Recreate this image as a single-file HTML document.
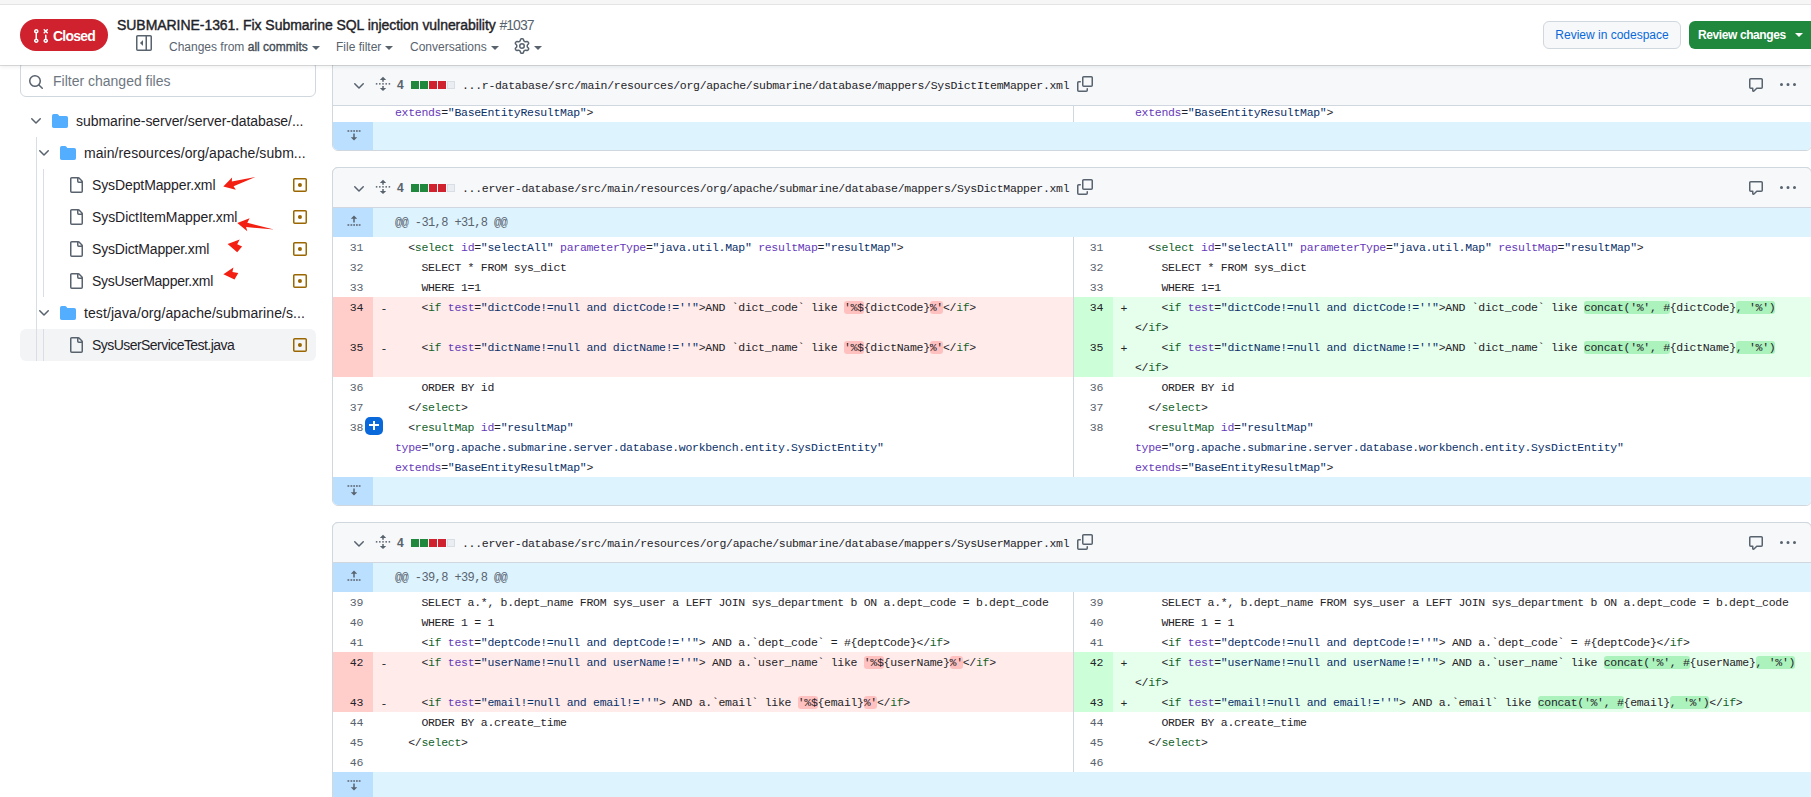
<!DOCTYPE html>
<html><head><meta charset="utf-8"><title>PR diff</title><style>
*{box-sizing:border-box}
html,body{margin:0;padding:0}
body{width:1811px;height:797px;overflow:hidden;position:relative;background:#fff;font-family:"Liberation Sans",sans-serif;color:#1f2328}
.ic{position:absolute;display:block;width:16px;height:16px;line-height:0}
.ic svg{display:block}
.topstrip{position:absolute;left:0;top:0;width:1811px;height:5px;background:#f6f6f6;border-bottom:1px solid #e6e6e6}
.header{position:absolute;left:0;top:5px;width:1811px;height:60px;background:#fff;z-index:20;box-shadow:0 1px 0 rgba(31,35,40,0.14),0 2px 4px rgba(31,35,40,0.08)}
.header .ic{margin-top:-5px}
.badge{position:absolute;left:20px;top:14px;width:88px;height:32px;border-radius:16px;background:#cf222e}
.badge .ic{margin-top:0}
.bt{position:absolute;left:33px;top:8px;font-size:14px;font-weight:bold;color:#fff;line-height:18px;letter-spacing:-0.75px}
.title{position:absolute;left:117px;top:11px;font-size:14px;font-weight:normal;-webkit-text-stroke:0.4px #1f2328;line-height:18px;white-space:nowrap;letter-spacing:-0.05px}
.title .num{font-weight:normal;color:#59636e;font-size:14px;-webkit-text-stroke:0}
.tb{position:absolute;top:34px;font-size:12px;line-height:16px;color:#59636e;white-space:nowrap}
.tb b{font-weight:normal;color:#424a53;-webkit-text-stroke:0.35px #424a53}
.caret{display:inline-block;width:0;height:0;border-left:4px solid transparent;border-right:4px solid transparent;border-top:4px solid #59636e;margin-left:4px;vertical-align:middle}
.caret.w{border-top-color:#fff;position:absolute;left:106px;top:12px;margin:0}
.btn1{position:absolute;left:1543px;top:16px;width:138px;height:28px;border:1px solid #d0d7de;border-radius:6px;background:#f6f8fa;color:#0969da;font-size:12px;line-height:26px;text-align:center;white-space:nowrap}
.btn2{position:absolute;left:1689px;top:16px;width:130px;height:28px;border-radius:6px;background:#1f883d;color:#fff;font-size:12px;font-weight:bold;line-height:28px;padding-left:9px;white-space:nowrap;letter-spacing:-0.4px}
.filter{position:absolute;left:20px;top:61px;width:296px;height:36px;border:1px solid #d0d7de;border-radius:6px;background:#fff}
.filter .ph{position:absolute;left:32px;top:10px;font-size:14px;line-height:18px;color:#6e7781}
.tt{position:absolute;font-size:14px;line-height:32px;color:#1f2328;white-space:nowrap}
.sel{position:absolute;left:20px;width:296px;height:32px;border-radius:6px;background:#f3f4f6}
.guide{position:absolute;width:1px;background:#d8dee4}
.card{position:absolute;left:332px;width:1480px;border:1px solid #d0d7de;border-radius:6px;background:#fff}
.fh{position:absolute;left:332px;width:1480px;height:40px;background:#f6f8fa;border-left:1px solid #d0d7de;border-right:1px solid #d0d7de;border-bottom:1px solid #d0d7de;z-index:5}
.fh .ic{position:absolute}
.fh .ic{margin-left:-333px}
.cnt{position:absolute;top:12px;margin-left:-333px;font-size:12px;font-weight:bold;line-height:16px;color:#59636e}
.sq{position:absolute;top:16px;width:8px;height:8px;margin-left:-333px}
.sq.g{background:#1f883d}.sq.r{background:#cf222e}.sq.n{background:#eaeef2;border:1px solid #d8dee4}
.path{position:absolute;top:13px;margin-left:-333px;font-family:"Liberation Mono",monospace;font-size:11.5px;letter-spacing:-0.3px;line-height:16px;color:#1f2328;white-space:nowrap}
.hunk{position:absolute;left:333px;width:1478px;background:#ddf4ff}
.hg{position:absolute;left:0;top:0;width:40px;background:#bbdfff}
.hg svg{position:absolute;left:13px;top:7px}
.dn .hg svg{top:3px}
.ht{position:absolute;left:62px;top:5px;font-family:"Liberation Mono",monospace;font-size:12px;letter-spacing:-0.6px;line-height:20px;color:#59636e;white-space:pre}
.row{position:absolute;left:333px;width:1478px}
.ln,.cd{position:absolute;top:0;bottom:0;font-family:"Liberation Mono",monospace;font-size:11.5px;letter-spacing:-0.3px;line-height:20px;white-space:pre}
.ln span,.cl span{position:relative;top:1px}
.ln{width:40px;text-align:right;padding-right:10px;color:#59636e}
.ln.l{left:0}
.cd.l{left:40px;width:700px}
.ln.r{left:740px;width:40px;border-left:1px solid #d0d7de}
.cd.r{left:780px;width:698px}
.ln.del{background:#ffcecb;color:#1f2328}
.cd.del{background:#ffebe9}
.ln.add{background:#ccffd8;color:#1f2328}
.cd.add{background:#e6ffec}
.cd .cl{padding-left:22px;height:20px}
.mk{position:absolute;left:7.5px;top:2px;font-style:normal;color:#1f2328}
.cd.del .hl{background:rgba(255,129,130,0.4);border-radius:3px}
.cd.add .hl{background:#abf2bc;border-radius:3px}
.plus{position:absolute;width:18px;height:18px;border-radius:5px;background:#0969da;z-index:6}
.plus:before{content:"";position:absolute;left:4.25px;top:7.25px;width:9.5px;height:1.25px;background:#fff}
.plus:after{content:"";position:absolute;left:8.4px;top:3.6px;width:1.25px;height:9.5px;background:#fff}
.arrows{position:absolute;left:0;top:0;z-index:30}
</style></head>
<body>
<div class="topstrip"></div><div class="header"><div class="badge"><span class="ic" style="left:13px;top:9px"><svg width="16" height="16" viewBox="0 0 16 16" fill="#fff"><path d="M3.25 1A2.25 2.25 0 0 1 4 5.372v5.256a2.251 2.251 0 1 1-1.5 0V5.372A2.251 2.251 0 0 1 3.25 1Zm9.5 5.5a.75.75 0 0 1 .75.75v3.378a2.251 2.251 0 1 1-1.5 0V7.25a.75.75 0 0 1 .75-.75Zm-2.03-5.273a.75.75 0 0 1 1.06 0l.97.97.97-.97a.748.748 0 0 1 1.265.332.75.75 0 0 1-.205.729l-.97.97.97.97a.751.751 0 0 1-.018 1.042.751.751 0 0 1-1.042.018l-.97-.97-.97.97a.749.749 0 0 1-1.275-.326.749.749 0 0 1 .215-.734l.97-.97-.97-.97a.75.75 0 0 1 0-1.06ZM2.5 3.25a.75.75 0 1 0 1.5 0 .75.75 0 0 0-1.5 0ZM3.25 12a.75.75 0 1 0 0 1.5.75.75 0 0 0 0-1.5Zm9.5 0a.75.75 0 1 0 0 1.5.75.75 0 0 0 0-1.5Z"/></svg></span><span class="bt">Closed</span></div><div class="title">SUBMARINE-1361. Fix Submarine SQL injection vulnerability <span class="num" style="letter-spacing:-1px">#1037</span></div><span class="ic" style="left:136px;top:35px"><svg width="16" height="16" viewBox="0 0 16 16" fill="#59636e"><path d="m4.177 7.823 2.396-2.396A.25.25 0 0 1 7 5.604v4.792a.25.25 0 0 1-.427.177L4.177 8.177a.25.25 0 0 1 0-.354Z"/><path d="M0 1.75C0 .784.784 0 1.75 0h12.5C15.216 0 16 .784 16 1.75v12.5A1.75 1.75 0 0 1 14.25 16H1.75A1.75 1.75 0 0 1 0 14.25Zm1.75-.25a.25.25 0 0 0-.25.25v12.5c0 .138.112.25.25.25H9.5v-13Zm12.5 13a.25.25 0 0 0 .25-.25V1.75a.25.25 0 0 0-.25-.25H11v13Z"/></svg></span><span class="tb" style="left:169px">Changes from <b>all commits</b><i class="caret"></i></span><span class="tb" style="left:336px">File filter<i class="caret"></i></span><span class="tb" style="left:410px">Conversations<i class="caret"></i></span><span class="ic" style="left:514px;top:38px"><svg width="16" height="16" viewBox="0 0 16 16" fill="#59636e"><path d="M8 0a8.2 8.2 0 0 1 .701.031C9.444.095 9.99.645 10.16 1.29l.288 1.107c.018.066.079.158.212.224.231.114.454.243.668.386.123.082.233.09.299.071l1.103-.303c.644-.176 1.392.021 1.82.63.27.385.506.792.704 1.218.315.675.111 1.422-.364 1.891l-.814.806c-.049.048-.098.147-.088.294.016.257.016.515 0 .772-.01.147.038.246.088.294l.814.806c.475.469.679 1.216.364 1.891a7.977 7.977 0 0 1-.704 1.217c-.428.61-1.176.807-1.82.63l-1.102-.302c-.067-.019-.177-.011-.3.071a5.909 5.909 0 0 1-.668.386c-.133.066-.194.158-.211.224l-.29 1.106c-.168.646-.715 1.196-1.458 1.26a8.006 8.006 0 0 1-1.402 0c-.743-.064-1.289-.614-1.458-1.26l-.289-1.106c-.018-.066-.079-.158-.212-.224a5.738 5.738 0 0 1-.668-.386c-.123-.082-.233-.09-.299-.071l-1.103.303c-.644.176-1.392-.021-1.82-.63a8.12 8.12 0 0 1-.704-1.218c-.315-.675-.111-1.422.363-1.891l.815-.806c.05-.048.098-.147.088-.294a6.214 6.214 0 0 1 0-.772c.01-.147-.038-.246-.088-.294l-.815-.806C.635 6.045.431 5.298.746 4.623a7.92 7.92 0 0 1 .704-1.217c.428-.61 1.176-.807 1.82-.63l1.102.302c.067.019.177.011.3-.071.214-.143.437-.272.668-.386.133-.066.194-.158.211-.224l.29-1.106C6.009.645 6.556.095 7.299.03 7.53.01 7.764 0 8 0Zm-.571 1.525c-.036.003-.108.036-.137.146l-.289 1.105c-.147.561-.549.967-.998 1.189-.173.086-.34.183-.5.29-.417.278-.97.423-1.529.27l-1.103-.303c-.109-.03-.175.016-.195.045-.22.312-.412.644-.573.99-.014.031-.021.11.059.19l.815.806c.411.406.562.957.53 1.456a4.709 4.709 0 0 0 0 .582c.032.499-.119 1.05-.53 1.456l-.815.806c-.081.08-.073.159-.059.19.162.346.353.677.573.989.02.03.085.076.195.046l1.102-.303c.56-.153 1.113-.008 1.53.27.161.107.328.204.501.29.447.222.85.629.997 1.189l.289 1.105c.029.109.101.143.137.146a6.6 6.6 0 0 0 1.142 0c.036-.003.108-.036.137-.146l.289-1.105c.147-.561.549-.967.998-1.189.173-.086.34-.183.5-.29.417-.278.97-.423 1.529-.27l1.103.303c.109.029.175-.016.195-.045.22-.313.411-.644.573-.99.014-.031.021-.11-.059-.19l-.815-.806c-.411-.406-.562-.957-.53-1.456a4.709 4.709 0 0 0 0-.582c-.032-.499.119-1.05.53-1.456l.815-.806c.081-.08.073-.159.059-.19a6.464 6.464 0 0 0-.573-.989c-.02-.03-.085-.076-.195-.046l-1.102.303c-.56.153-1.113.008-1.53-.27a4.44 4.44 0 0 0-.501-.29c-.447-.222-.85-.629-.997-1.189l-.289-1.105c-.029-.11-.101-.143-.137-.146a6.6 6.6 0 0 0-1.142 0ZM11 8a3 3 0 1 1-6 0 3 3 0 0 1 6 0ZM9.5 8a1.5 1.5 0 1 0-3.001.001A1.5 1.5 0 0 0 9.5 8Z"/></svg></span><i class="caret" style="position:absolute;left:534px;top:41px;margin:0"></i><div class="btn1">Review in codespace</div><div class="btn2">Review changes<i class="caret w"></i></div></div>
<div class="filter"><span class="ic" style="left:7px;top:12px"><svg width="16" height="16" viewBox="0 0 16 16" fill="#59636e"><path d="M10.68 11.74a6 6 0 0 1-7.922-8.982 6 6 0 0 1 8.982 7.922l3.04 3.04a.749.749 0 0 1-.326 1.275.749.749 0 0 1-.734-.215ZM11.5 7a4.499 4.499 0 1 0-8.997 0A4.499 4.499 0 0 0 11.5 7Z"/></svg></span><span class="ph">Filter changed files</span></div><div class="sel" style="top:329px"></div><div class="guide" style="left:36px;top:137px;height:224px"></div><div class="guide" style="left:43px;top:169px;height:128px"></div><div class="guide" style="left:43px;top:329px;height:32px"></div><span class="ic" style="left:28px;top:113px"><svg width="16" height="16" viewBox="0 0 16 16"><path d="M12.78 5.22a.749.749 0 0 1 0 1.06l-4.25 4.25a.749.749 0 0 1-1.06 0L3.22 6.28a.749.749 0 1 1 1.06-1.06L8 8.939l3.72-3.719a.749.749 0 0 1 1.06 0Z" fill="#59636e"/></svg></span><span class="ic" style="left:52px;top:113px"><svg width="16" height="16" viewBox="0 0 16 16"><path d="M1.75 1A1.75 1.75 0 0 0 0 2.75v10.5C0 14.216.784 15 1.75 15h12.5A1.75 1.75 0 0 0 16 13.25v-8.5A1.75 1.75 0 0 0 14.25 3H7.5a.25.25 0 0 1-.2-.1l-.9-1.2C6.07 1.26 5.55 1 5 1H1.75Z" fill="#54aeff"/></svg></span><span class="tt" style="left:76px;top:105px;letter-spacing:-0.06px">submarine-server/server-database/...</span><span class="ic" style="left:36px;top:145px"><svg width="16" height="16" viewBox="0 0 16 16"><path d="M12.78 5.22a.749.749 0 0 1 0 1.06l-4.25 4.25a.749.749 0 0 1-1.06 0L3.22 6.28a.749.749 0 1 1 1.06-1.06L8 8.939l3.72-3.719a.749.749 0 0 1 1.06 0Z" fill="#59636e"/></svg></span><span class="ic" style="left:60px;top:145px"><svg width="16" height="16" viewBox="0 0 16 16"><path d="M1.75 1A1.75 1.75 0 0 0 0 2.75v10.5C0 14.216.784 15 1.75 15h12.5A1.75 1.75 0 0 0 16 13.25v-8.5A1.75 1.75 0 0 0 14.25 3H7.5a.25.25 0 0 1-.2-.1l-.9-1.2C6.07 1.26 5.55 1 5 1H1.75Z" fill="#54aeff"/></svg></span><span class="tt" style="left:84px;top:137px;letter-spacing:0.07px">main/resources/org/apache/subm...</span><span class="ic" style="left:68px;top:177px"><svg width="16" height="16" viewBox="0 0 16 16" fill="#59636e"><path d="M2 1.75C2 .784 2.784 0 3.75 0h6.586c.464 0 .909.184 1.237.513l2.914 2.914c.329.328.513.773.513 1.237v9.586A1.75 1.75 0 0 1 13.25 16h-9.5A1.75 1.75 0 0 1 2 14.25Zm1.75-.25a.25.25 0 0 0-.25.25v12.5c0 .138.112.25.25.25h9.5a.25.25 0 0 0 .25-.25V6h-2.75A1.75 1.75 0 0 1 9 4.25V1.5Zm6.75.062V4.25c0 .138.112.25.25.25h2.688l-.011-.013-2.914-2.914-.013-.011Z"/></svg></span><span class="tt" style="left:92px;top:169px;letter-spacing:-0.11px">SysDeptMapper.xml</span><span class="ic" style="left:292px;top:177px"><svg width="16" height="16" viewBox="0 0 16 16" fill="#9a6700"><path d="M13.25 1c.966 0 1.75.784 1.75 1.75v10.5A1.75 1.75 0 0 1 13.25 15H2.75A1.75 1.75 0 0 1 1 13.25V2.75C1 1.784 1.784 1 2.75 1ZM2.75 2.5a.25.25 0 0 0-.25.25v10.5c0 .138.112.25.25.25h10.5a.25.25 0 0 0 .25-.25V2.75a.25.25 0 0 0-.25-.25ZM8 10a2 2 0 1 1-.001-3.999A2 2 0 0 1 8 10Z"/></svg></span><span class="ic" style="left:68px;top:209px"><svg width="16" height="16" viewBox="0 0 16 16" fill="#59636e"><path d="M2 1.75C2 .784 2.784 0 3.75 0h6.586c.464 0 .909.184 1.237.513l2.914 2.914c.329.328.513.773.513 1.237v9.586A1.75 1.75 0 0 1 13.25 16h-9.5A1.75 1.75 0 0 1 2 14.25Zm1.75-.25a.25.25 0 0 0-.25.25v12.5c0 .138.112.25.25.25h9.5a.25.25 0 0 0 .25-.25V6h-2.75A1.75 1.75 0 0 1 9 4.25V1.5Zm6.75.062V4.25c0 .138.112.25.25.25h2.688l-.011-.013-2.914-2.914-.013-.011Z"/></svg></span><span class="tt" style="left:92px;top:201px;letter-spacing:-0.08px">SysDictItemMapper.xml</span><span class="ic" style="left:292px;top:209px"><svg width="16" height="16" viewBox="0 0 16 16" fill="#9a6700"><path d="M13.25 1c.966 0 1.75.784 1.75 1.75v10.5A1.75 1.75 0 0 1 13.25 15H2.75A1.75 1.75 0 0 1 1 13.25V2.75C1 1.784 1.784 1 2.75 1ZM2.75 2.5a.25.25 0 0 0-.25.25v10.5c0 .138.112.25.25.25h10.5a.25.25 0 0 0 .25-.25V2.75a.25.25 0 0 0-.25-.25ZM8 10a2 2 0 1 1-.001-3.999A2 2 0 0 1 8 10Z"/></svg></span><span class="ic" style="left:68px;top:241px"><svg width="16" height="16" viewBox="0 0 16 16" fill="#59636e"><path d="M2 1.75C2 .784 2.784 0 3.75 0h6.586c.464 0 .909.184 1.237.513l2.914 2.914c.329.328.513.773.513 1.237v9.586A1.75 1.75 0 0 1 13.25 16h-9.5A1.75 1.75 0 0 1 2 14.25Zm1.75-.25a.25.25 0 0 0-.25.25v12.5c0 .138.112.25.25.25h9.5a.25.25 0 0 0 .25-.25V6h-2.75A1.75 1.75 0 0 1 9 4.25V1.5Zm6.75.062V4.25c0 .138.112.25.25.25h2.688l-.011-.013-2.914-2.914-.013-.011Z"/></svg></span><span class="tt" style="left:92px;top:233px;letter-spacing:-0.16px">SysDictMapper.xml</span><span class="ic" style="left:292px;top:241px"><svg width="16" height="16" viewBox="0 0 16 16" fill="#9a6700"><path d="M13.25 1c.966 0 1.75.784 1.75 1.75v10.5A1.75 1.75 0 0 1 13.25 15H2.75A1.75 1.75 0 0 1 1 13.25V2.75C1 1.784 1.784 1 2.75 1ZM2.75 2.5a.25.25 0 0 0-.25.25v10.5c0 .138.112.25.25.25h10.5a.25.25 0 0 0 .25-.25V2.75a.25.25 0 0 0-.25-.25ZM8 10a2 2 0 1 1-.001-3.999A2 2 0 0 1 8 10Z"/></svg></span><span class="ic" style="left:68px;top:273px"><svg width="16" height="16" viewBox="0 0 16 16" fill="#59636e"><path d="M2 1.75C2 .784 2.784 0 3.75 0h6.586c.464 0 .909.184 1.237.513l2.914 2.914c.329.328.513.773.513 1.237v9.586A1.75 1.75 0 0 1 13.25 16h-9.5A1.75 1.75 0 0 1 2 14.25Zm1.75-.25a.25.25 0 0 0-.25.25v12.5c0 .138.112.25.25.25h9.5a.25.25 0 0 0 .25-.25V6h-2.75A1.75 1.75 0 0 1 9 4.25V1.5Zm6.75.062V4.25c0 .138.112.25.25.25h2.688l-.011-.013-2.914-2.914-.013-.011Z"/></svg></span><span class="tt" style="left:92px;top:265px;letter-spacing:-0.25px">SysUserMapper.xml</span><span class="ic" style="left:292px;top:273px"><svg width="16" height="16" viewBox="0 0 16 16" fill="#9a6700"><path d="M13.25 1c.966 0 1.75.784 1.75 1.75v10.5A1.75 1.75 0 0 1 13.25 15H2.75A1.75 1.75 0 0 1 1 13.25V2.75C1 1.784 1.784 1 2.75 1ZM2.75 2.5a.25.25 0 0 0-.25.25v10.5c0 .138.112.25.25.25h10.5a.25.25 0 0 0 .25-.25V2.75a.25.25 0 0 0-.25-.25ZM8 10a2 2 0 1 1-.001-3.999A2 2 0 0 1 8 10Z"/></svg></span><span class="ic" style="left:36px;top:305px"><svg width="16" height="16" viewBox="0 0 16 16"><path d="M12.78 5.22a.749.749 0 0 1 0 1.06l-4.25 4.25a.749.749 0 0 1-1.06 0L3.22 6.28a.749.749 0 1 1 1.06-1.06L8 8.939l3.72-3.719a.749.749 0 0 1 1.06 0Z" fill="#59636e"/></svg></span><span class="ic" style="left:60px;top:305px"><svg width="16" height="16" viewBox="0 0 16 16"><path d="M1.75 1A1.75 1.75 0 0 0 0 2.75v10.5C0 14.216.784 15 1.75 15h12.5A1.75 1.75 0 0 0 16 13.25v-8.5A1.75 1.75 0 0 0 14.25 3H7.5a.25.25 0 0 1-.2-.1l-.9-1.2C6.07 1.26 5.55 1 5 1H1.75Z" fill="#54aeff"/></svg></span><span class="tt" style="left:84px;top:297px;letter-spacing:0.09px">test/java/org/apache/submarine/s...</span><span class="ic" style="left:68px;top:337px"><svg width="16" height="16" viewBox="0 0 16 16" fill="#59636e"><path d="M2 1.75C2 .784 2.784 0 3.75 0h6.586c.464 0 .909.184 1.237.513l2.914 2.914c.329.328.513.773.513 1.237v9.586A1.75 1.75 0 0 1 13.25 16h-9.5A1.75 1.75 0 0 1 2 14.25Zm1.75-.25a.25.25 0 0 0-.25.25v12.5c0 .138.112.25.25.25h9.5a.25.25 0 0 0 .25-.25V6h-2.75A1.75 1.75 0 0 1 9 4.25V1.5Zm6.75.062V4.25c0 .138.112.25.25.25h2.688l-.011-.013-2.914-2.914-.013-.011Z"/></svg></span><span class="tt" style="left:92px;top:329px;letter-spacing:-0.55px">SysUserServiceTest.java</span><span class="ic" style="left:292px;top:337px"><svg width="16" height="16" viewBox="0 0 16 16" fill="#9a6700"><path d="M13.25 1c.966 0 1.75.784 1.75 1.75v10.5A1.75 1.75 0 0 1 13.25 15H2.75A1.75 1.75 0 0 1 1 13.25V2.75C1 1.784 1.784 1 2.75 1ZM2.75 2.5a.25.25 0 0 0-.25.25v10.5c0 .138.112.25.25.25h10.5a.25.25 0 0 0 .25-.25V2.75a.25.25 0 0 0-.25-.25ZM8 10a2 2 0 1 1-.001-3.999A2 2 0 0 1 8 10Z"/></svg></span>
<div class="card" style="top:20px;height:131px"></div>
<div class="row" style="top:102px;height:20px">
<div class="ln l"><span></span></div>
<div class="cd l"><i class="mk"></i><div class="cl"><span style="color:#6639ba">extends</span><span style="color:#1f2328">=</span><span style="color:#0a3069">&quot;BaseEntityResultMap&quot;</span><span style="color:#1f2328">&gt;</span></div></div>
<div class="ln r"><span></span></div>
<div class="cd r"><i class="mk"></i><div class="cl"><span style="color:#6639ba">extends</span><span style="color:#1f2328">=</span><span style="color:#0a3069">&quot;BaseEntityResultMap&quot;</span><span style="color:#1f2328">&gt;</span></div></div>
</div>
<div class="hunk dn" style="top:122px;height:28px;border-radius:0 0 5px 5px;overflow:hidden"><div class="hg" style="height:28px"><svg width="16" height="16" viewBox="0 0 16 16" fill="#59636e"><path d="M8 15.5 L11.25 12.25 L8.75 12.25 L8.75 8.5 L7.25 8.5 L7.25 12.25 L4.75 12.25 Z"/><rect x="1.5" y="5.25" width="1.75" height="1.5"/><rect x="4.5" y="5.25" width="1.75" height="1.5"/><rect x="7.25" y="5.25" width="1.75" height="1.5"/><rect x="10" y="5.25" width="1.75" height="1.5"/><rect x="12.75" y="5.25" width="1.75" height="1.5"/></svg></div><div class="ht"></div></div>
<div class="fh" style="top:65px;height:41px"><span class="ic" style="left:351px;top:13px"><svg width="16" height="16" viewBox="0 0 16 16"><path d="M12.78 5.22a.749.749 0 0 1 0 1.06l-4.25 4.25a.749.749 0 0 1-1.06 0L3.22 6.28a.749.749 0 1 1 1.06-1.06L8 8.939l3.72-3.719a.749.749 0 0 1 1.06 0Z" fill="#59636e"/></svg></span><span class="ic" style="left:375px;top:11px"><svg width="16" height="16" viewBox="0 0 16 16" fill="#59636e"><path d="M8 0.8 L11.2 3.9 L8.75 3.9 L8.75 5.7 L7.25 5.7 L7.25 3.9 L4.8 3.9 Z"/><path d="M8 15 L11.2 11.9 L8.75 11.9 L8.75 10.1 L7.25 10.1 L7.25 11.9 L4.8 11.9 Z"/><rect x="0.85" y="7.1" width="1.5" height="1.5"/><rect x="4.05" y="7.1" width="1.5" height="1.5"/><rect x="7.25" y="7.1" width="1.5" height="1.5"/><rect x="10.45" y="7.1" width="1.5" height="1.5"/><rect x="13.65" y="7.1" width="1.5" height="1.5"/></svg></span><span class="cnt" style="left:397px">4</span><span class="sq g" style="left:411px"></span><span class="sq g" style="left:420px"></span><span class="sq r" style="left:429px"></span><span class="sq r" style="left:438px"></span><span class="sq n" style="left:447px"></span><span class="path" style="left:462px">...r-database/src/main/resources/org/apache/submarine/database/mappers/SysDictItemMapper.xml</span><span class="ic" style="left:1077px;top:11px"><svg width="16" height="16" viewBox="0 0 16 16" fill="#59636e"><path d="M0 6.75C0 5.784.784 5 1.75 5h1.5a.75.75 0 0 1 0 1.5h-1.5a.25.25 0 0 0-.25.25v7.5c0 .138.112.25.25.25h7.5a.25.25 0 0 0 .25-.25v-1.5a.75.75 0 0 1 1.5 0v1.5A1.75 1.75 0 0 1 9.25 16h-7.5A1.75 1.75 0 0 1 0 14.25Z"/><path d="M5 1.75C5 .784 5.784 0 6.75 0h7.5C15.216 0 16 .784 16 1.75v7.5A1.75 1.75 0 0 1 14.25 11h-7.5A1.75 1.75 0 0 1 5 9.25Zm1.75-.25a.25.25 0 0 0-.25.25v7.5c0 .138.112.25.25.25h7.5a.25.25 0 0 0 .25-.25v-7.5a.25.25 0 0 0-.25-.25Z"/></svg></span><span class="ic" style="left:1748px;top:12px"><svg width="16" height="16" viewBox="0 0 16 16" fill="#59636e"><path d="M1 2.75C1 1.784 1.784 1 2.75 1h10.5c.966 0 1.75.784 1.75 1.75v7.5A1.75 1.75 0 0 1 13.25 12H9.06l-2.573 2.573A1.458 1.458 0 0 1 4 13.543V12H2.75A1.75 1.75 0 0 1 1 10.25Zm1.75-.25a.25.25 0 0 0-.25.25v7.5c0 .138.112.25.25.25h2a.75.75 0 0 1 .75.75v2.19l2.72-2.72a.749.749 0 0 1 .53-.22h4.5a.25.25 0 0 0 .25-.25v-7.5a.25.25 0 0 0-.25-.25Z"/></svg></span><span class="ic" style="left:1780px;top:12px"><svg width="16" height="16" viewBox="0 0 16 16" fill="#59636e"><path d="M8 9a1.5 1.5 0 1 0 0-3 1.5 1.5 0 0 0 0 3ZM1.5 9a1.5 1.5 0 1 0 0-3 1.5 1.5 0 0 0 0 3Zm13 0a1.5 1.5 0 1 0 0-3 1.5 1.5 0 0 0 0 3Z"/></svg></span></div>
<div class="card" style="top:167px;height:339px"></div>
<div class="fh" style="top:167px;height:41px;border-top:1px solid #d0d7de;border-radius:6px 6px 0 0"><span class="ic" style="left:351px;top:13px"><svg width="16" height="16" viewBox="0 0 16 16"><path d="M12.78 5.22a.749.749 0 0 1 0 1.06l-4.25 4.25a.749.749 0 0 1-1.06 0L3.22 6.28a.749.749 0 1 1 1.06-1.06L8 8.939l3.72-3.719a.749.749 0 0 1 1.06 0Z" fill="#59636e"/></svg></span><span class="ic" style="left:375px;top:11px"><svg width="16" height="16" viewBox="0 0 16 16" fill="#59636e"><path d="M8 0.8 L11.2 3.9 L8.75 3.9 L8.75 5.7 L7.25 5.7 L7.25 3.9 L4.8 3.9 Z"/><path d="M8 15 L11.2 11.9 L8.75 11.9 L8.75 10.1 L7.25 10.1 L7.25 11.9 L4.8 11.9 Z"/><rect x="0.85" y="7.1" width="1.5" height="1.5"/><rect x="4.05" y="7.1" width="1.5" height="1.5"/><rect x="7.25" y="7.1" width="1.5" height="1.5"/><rect x="10.45" y="7.1" width="1.5" height="1.5"/><rect x="13.65" y="7.1" width="1.5" height="1.5"/></svg></span><span class="cnt" style="left:397px">4</span><span class="sq g" style="left:411px"></span><span class="sq g" style="left:420px"></span><span class="sq r" style="left:429px"></span><span class="sq r" style="left:438px"></span><span class="sq n" style="left:447px"></span><span class="path" style="left:462px">...erver-database/src/main/resources/org/apache/submarine/database/mappers/SysDictMapper.xml</span><span class="ic" style="left:1077px;top:11px"><svg width="16" height="16" viewBox="0 0 16 16" fill="#59636e"><path d="M0 6.75C0 5.784.784 5 1.75 5h1.5a.75.75 0 0 1 0 1.5h-1.5a.25.25 0 0 0-.25.25v7.5c0 .138.112.25.25.25h7.5a.25.25 0 0 0 .25-.25v-1.5a.75.75 0 0 1 1.5 0v1.5A1.75 1.75 0 0 1 9.25 16h-7.5A1.75 1.75 0 0 1 0 14.25Z"/><path d="M5 1.75C5 .784 5.784 0 6.75 0h7.5C15.216 0 16 .784 16 1.75v7.5A1.75 1.75 0 0 1 14.25 11h-7.5A1.75 1.75 0 0 1 5 9.25Zm1.75-.25a.25.25 0 0 0-.25.25v7.5c0 .138.112.25.25.25h7.5a.25.25 0 0 0 .25-.25v-7.5a.25.25 0 0 0-.25-.25Z"/></svg></span><span class="ic" style="left:1748px;top:12px"><svg width="16" height="16" viewBox="0 0 16 16" fill="#59636e"><path d="M1 2.75C1 1.784 1.784 1 2.75 1h10.5c.966 0 1.75.784 1.75 1.75v7.5A1.75 1.75 0 0 1 13.25 12H9.06l-2.573 2.573A1.458 1.458 0 0 1 4 13.543V12H2.75A1.75 1.75 0 0 1 1 10.25Zm1.75-.25a.25.25 0 0 0-.25.25v7.5c0 .138.112.25.25.25h2a.75.75 0 0 1 .75.75v2.19l2.72-2.72a.749.749 0 0 1 .53-.22h4.5a.25.25 0 0 0 .25-.25v-7.5a.25.25 0 0 0-.25-.25Z"/></svg></span><span class="ic" style="left:1780px;top:12px"><svg width="16" height="16" viewBox="0 0 16 16" fill="#59636e"><path d="M8 9a1.5 1.5 0 1 0 0-3 1.5 1.5 0 0 0 0 3ZM1.5 9a1.5 1.5 0 1 0 0-3 1.5 1.5 0 0 0 0 3Zm13 0a1.5 1.5 0 1 0 0-3 1.5 1.5 0 0 0 0 3Z"/></svg></span></div>
<div class="hunk up" style="top:208px;height:29px"><div class="hg" style="height:29px"><svg width="16" height="16" viewBox="0 0 16 16" fill="#59636e"><path d="M8 0.5 L11.25 3.75 L8.75 3.75 L8.75 7.5 L7.25 7.5 L7.25 3.75 L4.75 3.75 Z"/><rect x="1.5" y="9.25" width="1.75" height="1.5"/><rect x="4.5" y="9.25" width="1.75" height="1.5"/><rect x="7.25" y="9.25" width="1.75" height="1.5"/><rect x="10" y="9.25" width="1.75" height="1.5"/><rect x="12.75" y="9.25" width="1.75" height="1.5"/></svg></div><div class="ht">@@ -31,8 +31,8 @@</div></div>
<div class="row" style="top:237px;height:20px">
<div class="ln l"><span>31</span></div>
<div class="cd l"><i class="mk"></i><div class="cl"><span style="color:#1f2328">  &lt;</span><span style="color:#116329">select</span><span style="color:#1f2328"> </span><span style="color:#6639ba">id</span><span style="color:#1f2328">=</span><span style="color:#0a3069">&quot;selectAll&quot;</span><span style="color:#1f2328"> </span><span style="color:#6639ba">parameterType</span><span style="color:#1f2328">=</span><span style="color:#0a3069">&quot;java.util.Map&quot;</span><span style="color:#1f2328"> </span><span style="color:#6639ba">resultMap</span><span style="color:#1f2328">=</span><span style="color:#0a3069">&quot;resultMap&quot;</span><span style="color:#1f2328">&gt;</span></div></div>
<div class="ln r"><span>31</span></div>
<div class="cd r"><i class="mk"></i><div class="cl"><span style="color:#1f2328">  &lt;</span><span style="color:#116329">select</span><span style="color:#1f2328"> </span><span style="color:#6639ba">id</span><span style="color:#1f2328">=</span><span style="color:#0a3069">&quot;selectAll&quot;</span><span style="color:#1f2328"> </span><span style="color:#6639ba">parameterType</span><span style="color:#1f2328">=</span><span style="color:#0a3069">&quot;java.util.Map&quot;</span><span style="color:#1f2328"> </span><span style="color:#6639ba">resultMap</span><span style="color:#1f2328">=</span><span style="color:#0a3069">&quot;resultMap&quot;</span><span style="color:#1f2328">&gt;</span></div></div>
</div>
<div class="row" style="top:257px;height:20px">
<div class="ln l"><span>32</span></div>
<div class="cd l"><i class="mk"></i><div class="cl"><span style="color:#1f2328">    SELECT * FROM sys_dict</span></div></div>
<div class="ln r"><span>32</span></div>
<div class="cd r"><i class="mk"></i><div class="cl"><span style="color:#1f2328">    SELECT * FROM sys_dict</span></div></div>
</div>
<div class="row" style="top:277px;height:20px">
<div class="ln l"><span>33</span></div>
<div class="cd l"><i class="mk"></i><div class="cl"><span style="color:#1f2328">    WHERE 1=1</span></div></div>
<div class="ln r"><span>33</span></div>
<div class="cd r"><i class="mk"></i><div class="cl"><span style="color:#1f2328">    WHERE 1=1</span></div></div>
</div>
<div class="row" style="top:297px;height:40px">
<div class="ln l del"><span>34</span></div>
<div class="cd l del"><i class="mk">-</i><div class="cl"><span style="color:#1f2328">    &lt;</span><span style="color:#116329">if</span><span style="color:#1f2328"> </span><span style="color:#6639ba">test</span><span style="color:#1f2328">=</span><span style="color:#0a3069">&quot;dictCode!=null and dictCode!=&#x27;&#x27;&quot;</span><span style="color:#1f2328">&gt;AND `dict_code` like </span><span class="hl" style="color:#1f2328">&#x27;%$</span><span style="color:#1f2328">{dictCode}</span><span class="hl" style="color:#1f2328">%&#x27;</span><span style="color:#1f2328">&lt;/</span><span style="color:#116329">if</span><span style="color:#1f2328">&gt;</span></div></div>
<div class="ln r add"><span>34</span></div>
<div class="cd r add"><i class="mk">+</i><div class="cl"><span style="color:#1f2328">    &lt;</span><span style="color:#116329">if</span><span style="color:#1f2328"> </span><span style="color:#6639ba">test</span><span style="color:#1f2328">=</span><span style="color:#0a3069">&quot;dictCode!=null and dictCode!=&#x27;&#x27;&quot;</span><span style="color:#1f2328">&gt;AND `dict_code` like </span><span class="hl" style="color:#1f2328">concat(&#x27;%&#x27;, #</span><span style="color:#1f2328">{dictCode}</span><span class="hl" style="color:#1f2328">, &#x27;%&#x27;)</span></div><div class="cl"><span style="color:#1f2328">&lt;/</span><span style="color:#116329">if</span><span style="color:#1f2328">&gt;</span></div></div>
</div>
<div class="row" style="top:337px;height:40px">
<div class="ln l del"><span>35</span></div>
<div class="cd l del"><i class="mk">-</i><div class="cl"><span style="color:#1f2328">    &lt;</span><span style="color:#116329">if</span><span style="color:#1f2328"> </span><span style="color:#6639ba">test</span><span style="color:#1f2328">=</span><span style="color:#0a3069">&quot;dictName!=null and dictName!=&#x27;&#x27;&quot;</span><span style="color:#1f2328">&gt;AND `dict_name` like </span><span class="hl" style="color:#1f2328">&#x27;%$</span><span style="color:#1f2328">{dictName}</span><span class="hl" style="color:#1f2328">%&#x27;</span><span style="color:#1f2328">&lt;/</span><span style="color:#116329">if</span><span style="color:#1f2328">&gt;</span></div></div>
<div class="ln r add"><span>35</span></div>
<div class="cd r add"><i class="mk">+</i><div class="cl"><span style="color:#1f2328">    &lt;</span><span style="color:#116329">if</span><span style="color:#1f2328"> </span><span style="color:#6639ba">test</span><span style="color:#1f2328">=</span><span style="color:#0a3069">&quot;dictName!=null and dictName!=&#x27;&#x27;&quot;</span><span style="color:#1f2328">&gt;AND `dict_name` like </span><span class="hl" style="color:#1f2328">concat(&#x27;%&#x27;, #</span><span style="color:#1f2328">{dictName}</span><span class="hl" style="color:#1f2328">, &#x27;%&#x27;)</span></div><div class="cl"><span style="color:#1f2328">&lt;/</span><span style="color:#116329">if</span><span style="color:#1f2328">&gt;</span></div></div>
</div>
<div class="row" style="top:377px;height:20px">
<div class="ln l"><span>36</span></div>
<div class="cd l"><i class="mk"></i><div class="cl"><span style="color:#1f2328">    ORDER BY id</span></div></div>
<div class="ln r"><span>36</span></div>
<div class="cd r"><i class="mk"></i><div class="cl"><span style="color:#1f2328">    ORDER BY id</span></div></div>
</div>
<div class="row" style="top:397px;height:20px">
<div class="ln l"><span>37</span></div>
<div class="cd l"><i class="mk"></i><div class="cl"><span style="color:#1f2328">  &lt;/</span><span style="color:#116329">select</span><span style="color:#1f2328">&gt;</span></div></div>
<div class="ln r"><span>37</span></div>
<div class="cd r"><i class="mk"></i><div class="cl"><span style="color:#1f2328">  &lt;/</span><span style="color:#116329">select</span><span style="color:#1f2328">&gt;</span></div></div>
</div>
<div class="row" style="top:417px;height:60px">
<div class="ln l"><span>38</span></div>
<div class="cd l"><i class="mk"></i><div class="cl"><span style="color:#1f2328">  &lt;</span><span style="color:#116329">resultMap</span><span style="color:#1f2328"> </span><span style="color:#6639ba">id</span><span style="color:#1f2328">=</span><span style="color:#0a3069">&quot;resultMap&quot;</span></div><div class="cl"><span style="color:#6639ba">type</span><span style="color:#1f2328">=</span><span style="color:#0a3069">&quot;org.apache.submarine.server.database.workbench.entity.SysDictEntity&quot;</span></div><div class="cl"><span style="color:#6639ba">extends</span><span style="color:#1f2328">=</span><span style="color:#0a3069">&quot;BaseEntityResultMap&quot;</span><span style="color:#1f2328">&gt;</span></div></div>
<div class="ln r"><span>38</span></div>
<div class="cd r"><i class="mk"></i><div class="cl"><span style="color:#1f2328">  &lt;</span><span style="color:#116329">resultMap</span><span style="color:#1f2328"> </span><span style="color:#6639ba">id</span><span style="color:#1f2328">=</span><span style="color:#0a3069">&quot;resultMap&quot;</span></div><div class="cl"><span style="color:#6639ba">type</span><span style="color:#1f2328">=</span><span style="color:#0a3069">&quot;org.apache.submarine.server.database.workbench.entity.SysDictEntity&quot;</span></div><div class="cl"><span style="color:#6639ba">extends</span><span style="color:#1f2328">=</span><span style="color:#0a3069">&quot;BaseEntityResultMap&quot;</span><span style="color:#1f2328">&gt;</span></div></div>
</div>
<div class="hunk dn" style="top:477px;height:28px;border-radius:0 0 5px 5px;overflow:hidden"><div class="hg" style="height:28px"><svg width="16" height="16" viewBox="0 0 16 16" fill="#59636e"><path d="M8 15.5 L11.25 12.25 L8.75 12.25 L8.75 8.5 L7.25 8.5 L7.25 12.25 L4.75 12.25 Z"/><rect x="1.5" y="5.25" width="1.75" height="1.5"/><rect x="4.5" y="5.25" width="1.75" height="1.5"/><rect x="7.25" y="5.25" width="1.75" height="1.5"/><rect x="10" y="5.25" width="1.75" height="1.5"/><rect x="12.75" y="5.25" width="1.75" height="1.5"/></svg></div><div class="ht"></div></div>
<div class="plus" style="left:365px;top:417px"></div>
<div class="card" style="top:522px;height:400px"></div>
<div class="fh" style="top:522px;height:41px;border-top:1px solid #d0d7de;border-radius:6px 6px 0 0"><span class="ic" style="left:351px;top:13px"><svg width="16" height="16" viewBox="0 0 16 16"><path d="M12.78 5.22a.749.749 0 0 1 0 1.06l-4.25 4.25a.749.749 0 0 1-1.06 0L3.22 6.28a.749.749 0 1 1 1.06-1.06L8 8.939l3.72-3.719a.749.749 0 0 1 1.06 0Z" fill="#59636e"/></svg></span><span class="ic" style="left:375px;top:11px"><svg width="16" height="16" viewBox="0 0 16 16" fill="#59636e"><path d="M8 0.8 L11.2 3.9 L8.75 3.9 L8.75 5.7 L7.25 5.7 L7.25 3.9 L4.8 3.9 Z"/><path d="M8 15 L11.2 11.9 L8.75 11.9 L8.75 10.1 L7.25 10.1 L7.25 11.9 L4.8 11.9 Z"/><rect x="0.85" y="7.1" width="1.5" height="1.5"/><rect x="4.05" y="7.1" width="1.5" height="1.5"/><rect x="7.25" y="7.1" width="1.5" height="1.5"/><rect x="10.45" y="7.1" width="1.5" height="1.5"/><rect x="13.65" y="7.1" width="1.5" height="1.5"/></svg></span><span class="cnt" style="left:397px">4</span><span class="sq g" style="left:411px"></span><span class="sq g" style="left:420px"></span><span class="sq r" style="left:429px"></span><span class="sq r" style="left:438px"></span><span class="sq n" style="left:447px"></span><span class="path" style="left:462px">...erver-database/src/main/resources/org/apache/submarine/database/mappers/SysUserMapper.xml</span><span class="ic" style="left:1077px;top:11px"><svg width="16" height="16" viewBox="0 0 16 16" fill="#59636e"><path d="M0 6.75C0 5.784.784 5 1.75 5h1.5a.75.75 0 0 1 0 1.5h-1.5a.25.25 0 0 0-.25.25v7.5c0 .138.112.25.25.25h7.5a.25.25 0 0 0 .25-.25v-1.5a.75.75 0 0 1 1.5 0v1.5A1.75 1.75 0 0 1 9.25 16h-7.5A1.75 1.75 0 0 1 0 14.25Z"/><path d="M5 1.75C5 .784 5.784 0 6.75 0h7.5C15.216 0 16 .784 16 1.75v7.5A1.75 1.75 0 0 1 14.25 11h-7.5A1.75 1.75 0 0 1 5 9.25Zm1.75-.25a.25.25 0 0 0-.25.25v7.5c0 .138.112.25.25.25h7.5a.25.25 0 0 0 .25-.25v-7.5a.25.25 0 0 0-.25-.25Z"/></svg></span><span class="ic" style="left:1748px;top:12px"><svg width="16" height="16" viewBox="0 0 16 16" fill="#59636e"><path d="M1 2.75C1 1.784 1.784 1 2.75 1h10.5c.966 0 1.75.784 1.75 1.75v7.5A1.75 1.75 0 0 1 13.25 12H9.06l-2.573 2.573A1.458 1.458 0 0 1 4 13.543V12H2.75A1.75 1.75 0 0 1 1 10.25Zm1.75-.25a.25.25 0 0 0-.25.25v7.5c0 .138.112.25.25.25h2a.75.75 0 0 1 .75.75v2.19l2.72-2.72a.749.749 0 0 1 .53-.22h4.5a.25.25 0 0 0 .25-.25v-7.5a.25.25 0 0 0-.25-.25Z"/></svg></span><span class="ic" style="left:1780px;top:12px"><svg width="16" height="16" viewBox="0 0 16 16" fill="#59636e"><path d="M8 9a1.5 1.5 0 1 0 0-3 1.5 1.5 0 0 0 0 3ZM1.5 9a1.5 1.5 0 1 0 0-3 1.5 1.5 0 0 0 0 3Zm13 0a1.5 1.5 0 1 0 0-3 1.5 1.5 0 0 0 0 3Z"/></svg></span></div>
<div class="hunk up" style="top:563px;height:29px"><div class="hg" style="height:29px"><svg width="16" height="16" viewBox="0 0 16 16" fill="#59636e"><path d="M8 0.5 L11.25 3.75 L8.75 3.75 L8.75 7.5 L7.25 7.5 L7.25 3.75 L4.75 3.75 Z"/><rect x="1.5" y="9.25" width="1.75" height="1.5"/><rect x="4.5" y="9.25" width="1.75" height="1.5"/><rect x="7.25" y="9.25" width="1.75" height="1.5"/><rect x="10" y="9.25" width="1.75" height="1.5"/><rect x="12.75" y="9.25" width="1.75" height="1.5"/></svg></div><div class="ht">@@ -39,8 +39,8 @@</div></div>
<div class="row" style="top:592px;height:20px">
<div class="ln l"><span>39</span></div>
<div class="cd l"><i class="mk"></i><div class="cl"><span style="color:#1f2328">    SELECT a.*, b.dept_name FROM sys_user a LEFT JOIN sys_department b ON a.dept_code = b.dept_code</span></div></div>
<div class="ln r"><span>39</span></div>
<div class="cd r"><i class="mk"></i><div class="cl"><span style="color:#1f2328">    SELECT a.*, b.dept_name FROM sys_user a LEFT JOIN sys_department b ON a.dept_code = b.dept_code</span></div></div>
</div>
<div class="row" style="top:612px;height:20px">
<div class="ln l"><span>40</span></div>
<div class="cd l"><i class="mk"></i><div class="cl"><span style="color:#1f2328">    WHERE 1 = 1</span></div></div>
<div class="ln r"><span>40</span></div>
<div class="cd r"><i class="mk"></i><div class="cl"><span style="color:#1f2328">    WHERE 1 = 1</span></div></div>
</div>
<div class="row" style="top:632px;height:20px">
<div class="ln l"><span>41</span></div>
<div class="cd l"><i class="mk"></i><div class="cl"><span style="color:#1f2328">    &lt;</span><span style="color:#116329">if</span><span style="color:#1f2328"> </span><span style="color:#6639ba">test</span><span style="color:#1f2328">=</span><span style="color:#0a3069">&quot;deptCode!=null and deptCode!=&#x27;&#x27;&quot;</span><span style="color:#1f2328">&gt; AND a.`dept_code` = #{deptCode}&lt;/</span><span style="color:#116329">if</span><span style="color:#1f2328">&gt;</span></div></div>
<div class="ln r"><span>41</span></div>
<div class="cd r"><i class="mk"></i><div class="cl"><span style="color:#1f2328">    &lt;</span><span style="color:#116329">if</span><span style="color:#1f2328"> </span><span style="color:#6639ba">test</span><span style="color:#1f2328">=</span><span style="color:#0a3069">&quot;deptCode!=null and deptCode!=&#x27;&#x27;&quot;</span><span style="color:#1f2328">&gt; AND a.`dept_code` = #{deptCode}&lt;/</span><span style="color:#116329">if</span><span style="color:#1f2328">&gt;</span></div></div>
</div>
<div class="row" style="top:652px;height:40px">
<div class="ln l del"><span>42</span></div>
<div class="cd l del"><i class="mk">-</i><div class="cl"><span style="color:#1f2328">    &lt;</span><span style="color:#116329">if</span><span style="color:#1f2328"> </span><span style="color:#6639ba">test</span><span style="color:#1f2328">=</span><span style="color:#0a3069">&quot;userName!=null and userName!=&#x27;&#x27;&quot;</span><span style="color:#1f2328">&gt; AND a.`user_name` like </span><span class="hl" style="color:#1f2328">&#x27;%$</span><span style="color:#1f2328">{userName}</span><span class="hl" style="color:#1f2328">%&#x27;</span><span style="color:#1f2328">&lt;/</span><span style="color:#116329">if</span><span style="color:#1f2328">&gt;</span></div></div>
<div class="ln r add"><span>42</span></div>
<div class="cd r add"><i class="mk">+</i><div class="cl"><span style="color:#1f2328">    &lt;</span><span style="color:#116329">if</span><span style="color:#1f2328"> </span><span style="color:#6639ba">test</span><span style="color:#1f2328">=</span><span style="color:#0a3069">&quot;userName!=null and userName!=&#x27;&#x27;&quot;</span><span style="color:#1f2328">&gt; AND a.`user_name` like </span><span class="hl" style="color:#1f2328">concat(&#x27;%&#x27;, #</span><span style="color:#1f2328">{userName}</span><span class="hl" style="color:#1f2328">, &#x27;%&#x27;)</span></div><div class="cl"><span style="color:#1f2328">&lt;/</span><span style="color:#116329">if</span><span style="color:#1f2328">&gt;</span></div></div>
</div>
<div class="row" style="top:692px;height:20px">
<div class="ln l del"><span>43</span></div>
<div class="cd l del"><i class="mk">-</i><div class="cl"><span style="color:#1f2328">    &lt;</span><span style="color:#116329">if</span><span style="color:#1f2328"> </span><span style="color:#6639ba">test</span><span style="color:#1f2328">=</span><span style="color:#0a3069">&quot;email!=null and email!=&#x27;&#x27;&quot;</span><span style="color:#1f2328">&gt; AND a.`email` like </span><span class="hl" style="color:#1f2328">&#x27;%$</span><span style="color:#1f2328">{email}</span><span class="hl" style="color:#1f2328">%&#x27;</span><span style="color:#1f2328">&lt;/</span><span style="color:#116329">if</span><span style="color:#1f2328">&gt;</span></div></div>
<div class="ln r add"><span>43</span></div>
<div class="cd r add"><i class="mk">+</i><div class="cl"><span style="color:#1f2328">    &lt;</span><span style="color:#116329">if</span><span style="color:#1f2328"> </span><span style="color:#6639ba">test</span><span style="color:#1f2328">=</span><span style="color:#0a3069">&quot;email!=null and email!=&#x27;&#x27;&quot;</span><span style="color:#1f2328">&gt; AND a.`email` like </span><span class="hl" style="color:#1f2328">concat(&#x27;%&#x27;, #</span><span style="color:#1f2328">{email}</span><span class="hl" style="color:#1f2328">, &#x27;%&#x27;)</span><span style="color:#1f2328">&lt;/</span><span style="color:#116329">if</span><span style="color:#1f2328">&gt;</span></div></div>
</div>
<div class="row" style="top:712px;height:20px">
<div class="ln l"><span>44</span></div>
<div class="cd l"><i class="mk"></i><div class="cl"><span style="color:#1f2328">    ORDER BY a.create_time</span></div></div>
<div class="ln r"><span>44</span></div>
<div class="cd r"><i class="mk"></i><div class="cl"><span style="color:#1f2328">    ORDER BY a.create_time</span></div></div>
</div>
<div class="row" style="top:732px;height:20px">
<div class="ln l"><span>45</span></div>
<div class="cd l"><i class="mk"></i><div class="cl"><span style="color:#1f2328">  &lt;/</span><span style="color:#116329">select</span><span style="color:#1f2328">&gt;</span></div></div>
<div class="ln r"><span>45</span></div>
<div class="cd r"><i class="mk"></i><div class="cl"><span style="color:#1f2328">  &lt;/</span><span style="color:#116329">select</span><span style="color:#1f2328">&gt;</span></div></div>
</div>
<div class="row" style="top:752px;height:20px">
<div class="ln l"><span>46</span></div>
<div class="cd l"><i class="mk"></i><div class="cl"></div></div>
<div class="ln r"><span>46</span></div>
<div class="cd r"><i class="mk"></i><div class="cl"></div></div>
</div>
<div class="hunk dn" style="top:772px;height:28px;border-radius:0 0 5px 5px;overflow:hidden"><div class="hg" style="height:28px"><svg width="16" height="16" viewBox="0 0 16 16" fill="#59636e"><path d="M8 15.5 L11.25 12.25 L8.75 12.25 L8.75 8.5 L7.25 8.5 L7.25 12.25 L4.75 12.25 Z"/><rect x="1.5" y="5.25" width="1.75" height="1.5"/><rect x="4.5" y="5.25" width="1.75" height="1.5"/><rect x="7.25" y="5.25" width="1.75" height="1.5"/><rect x="10" y="5.25" width="1.75" height="1.5"/><rect x="12.75" y="5.25" width="1.75" height="1.5"/></svg></div><div class="ht"></div></div>
<svg class="arrows" width="340" height="400" viewBox="0 0 340 400">
<path d="M223.3 186.6 L232.1 177.5 L231.8 181.6 L255.4 177 L233.6 186.3 L235.8 189.8 Z" fill="#f31f12"/>
<path d="M237.3 223.1 L249.6 218.3 L247.3 222.8 L273.9 229.6 L246.1 227.1 L247.3 231.3 Z" fill="#f31f12"/>
<path d="M227.6 244 L239.7 239.5 L237.2 244.3 L242.1 246.4 L237.2 252.2 Z" fill="#f31f12"/>
<path d="M223.4 274.3 L233.4 267.4 L232.4 271.9 L238.3 272.9 L234.5 279.5 Z" fill="#f31f12"/>
</svg>
</body></html>
